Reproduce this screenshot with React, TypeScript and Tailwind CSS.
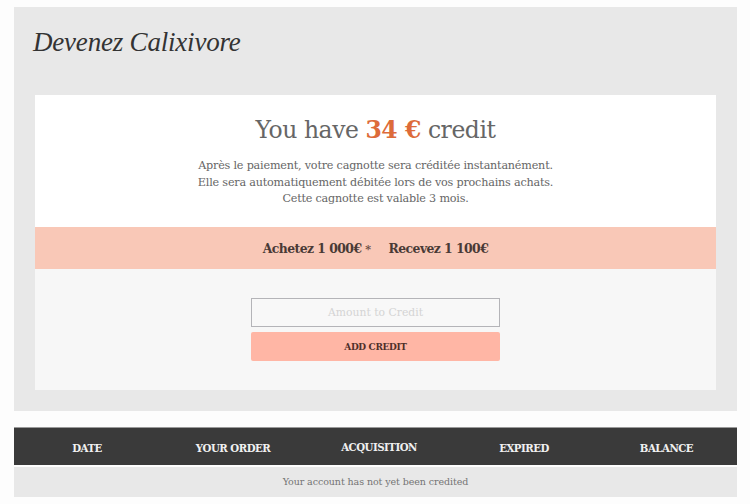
const serif = "font-['DejaVu_Serif','Liberation_Serif',serif]";

const columns = ['DATE', 'YOUR ORDER', 'ACQUISITION', 'EXPIRED', 'BALANCE'];

export default function App() {
  return (
    <main className={`${serif} w-[750px] h-[504px] overflow-hidden bg-[#fdfdfd] pl-[14px] pt-[7px]`}>
      <section className="h-[404px] w-[723px] bg-[#e8e8e8] px-[21px]">
        <h2 className="h-[88px] -ml-[2px] pt-[19px] font-['Liberation_Serif',cursive] text-[27px] leading-[32px] italic -tracking-[0.2px] text-[#333333]">
          Devenez Calixivore
        </h2>

        <div className="bg-white">
          <div className="h-[132px] pt-[19px] text-center">
            <h1 className="text-[23.5px] leading-[32px] -tracking-[0.45px] text-[#666666]">
              You have <strong className="font-bold text-[#dd6b3a]">34 €</strong> credit
            </h1>
            <p className="mt-[12px] text-[11.2px] leading-[16.5px] -tracking-[0.2px] text-[#666666]">
              Après le paiement, votre cagnotte sera créditée instantanément.
              <br />
              Elle sera automatiquement débitée lors de vos prochains achats.
              <br />
              Cette cagnotte est valable 3 mois.
            </p>
          </div>

          <div className="flex h-[42px] items-center justify-center gap-[18px] bg-[#f9c8b7] pt-[2px] text-[12.4px] font-bold -tracking-[0.55px] text-[#4a3a36]">
            <span>
              Achetez 1 000€ <span className="text-[11px] text-[#6a4a42]">*</span>
            </span>
            <span>Recevez 1 100€</span>
          </div>

          <div className="h-[121px] bg-[#f7f7f7] pt-[29px]">
            <div className="mx-auto flex w-[249px] flex-col gap-[5px]">
              <input
                placeholder="Amount to Credit"
                className="h-[29px] w-full border border-[#b4b4b8] bg-[#f8f8f8] text-center text-[10.8px] outline-none placeholder:text-[#d4d4d4]"
              />
              <button className="h-[29px] rounded-[2px] bg-[#ffb6a5] pt-[2px] text-[9px] font-bold -tracking-[0.35px] text-[#4f2f2a]">
                ADD CREDIT
              </button>
            </div>
          </div>
        </div>
      </section>

      <section className="mt-[16px] w-[723px]">
        <div className="grid h-[38px] grid-cols-[146px_146px_146px_144px_141px] items-center border-t border-[#9a9a9a] bg-[#3a3a3a] pt-[5px] text-center text-[10.2px] font-bold -tracking-[0.5px] text-[#f0f0f0]">
          {columns.map((col) => (
            <span key={col} className={col === 'ACQUISITION' ? 'pb-[2px]' : ''}>
              {col}
            </span>
          ))}
        </div>
        <div className="mt-[2px] flex h-[30px] items-center justify-center bg-[#e8e8e8] text-[9.5px] -tracking-[0.08px] text-[#747474]">
          Your account has not yet been credited
        </div>
      </section>
    </main>
  );
}
